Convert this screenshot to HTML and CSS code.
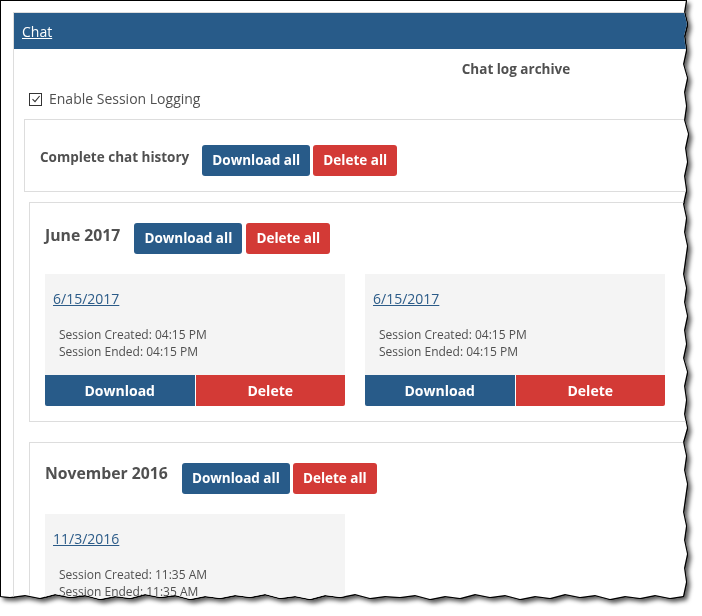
FILE: index.html
```html
<!DOCTYPE html>
<html>
<head>
<meta charset="utf-8">
<link rel="stylesheet" href="styles.css">
</head>
<body>
<div class="shot">
  <div class="paper">
    <div class="panel">
      <div class="panel-head"><a href="#" class="head-link">Chat</a></div>
      <div class="panel-body">
        <div class="archive-title">Chat log archive</div>
        <label class="logging">
          <span class="check"><svg width="10" height="10" viewBox="0 0 10 10"><path d="M1.5 5.2 L4 7.6 L8.6 2" fill="none" stroke="#333" stroke-width="1.1"/></svg></span>
          Enable Session Logging
        </label>
        <div class="history">
          <div class="history-title">Complete chat history</div>
          <div class="btn-group">
            <button class="btn btn-blue">Download all</button>
            <button class="btn btn-red">Delete all</button>
          </div>
        </div>

        <div class="month">
          <div class="month-head">
            <div class="month-title">June 2017</div>
            <div class="btn-group wide">
              <button class="btn btn-blue">Download all</button>
              <button class="btn btn-red">Delete all</button>
            </div>
          </div>
          <div class="cards">
            <div class="card">
              <div class="card-body">
                <a href="#" class="date">6/15/2017</a>
                <div class="session">Session Created: 04:15 PM<br>Session Ended: 04:15 PM</div>
              </div>
              <div class="card-actions">
                <button class="cbtn btn-blue">Download</button>
                <button class="cbtn btn-red">Delete</button>
              </div>
            </div>
            <div class="card">
              <div class="card-body">
                <a href="#" class="date">6/15/2017</a>
                <div class="session">Session Created: 04:15 PM<br>Session Ended: 04:15 PM</div>
              </div>
              <div class="card-actions">
                <button class="cbtn btn-blue">Download</button>
                <button class="cbtn btn-red">Delete</button>
              </div>
            </div>
          </div>
        </div>

        <div class="month month-gap">
          <div class="month-head">
            <div class="month-title nov">November 2016</div>
            <div class="btn-group">
              <button class="btn btn-blue">Download all</button>
              <button class="btn btn-red">Delete all</button>
            </div>
          </div>
          <div class="cards">
            <div class="card">
              <div class="card-body">
                <a href="#" class="date">11/3/2016</a>
                <div class="session">Session Created: 11:35 AM<br>Session Ended: 11:35 AM</div>
              </div>
              <div class="card-actions">
                <button class="cbtn btn-blue">Download</button>
                <button class="cbtn btn-red">Delete</button>
              </div>
            </div>
          </div>
        </div>
      </div>
    </div>
  </div>
</div>
</body>
</html>
```

FILE: styles.css
```css
html, body {
  margin: 0;
  padding: 0;
  background: #fff;
}
body {
  font-family: "Open Sans", "Liberation Sans", sans-serif;
  color: #505050;
}
.shot {
  width: 696px;
  height: 608px;
  filter: drop-shadow(1px 0 0 #000) drop-shadow(0 1px 0 #000) drop-shadow(3px 3px 2px rgba(0,0,0,0.65));
}
.paper {
  width: 690px;
  height: 600px;
  box-sizing: border-box;
  background: #fff;
  border-left: 1px solid #000;
  border-top: 1px solid #000;
  overflow: hidden;
  padding: 11px 0 0 12px;
  clip-path: polygon(0 0, 686px 0, 684px 12px, 687px 24px, 684px 36px, 686px 50px, 683px 64px, 687px 78px, 684px 92px, 686px 106px, 684px 120px, 688px 134px, 685px 148px, 687px 162px, 684px 176px, 686px 190px, 683px 204px, 686px 218px, 684px 232px, 687px 246px, 685px 260px, 683px 274px, 686px 288px, 684px 302px, 687px 316px, 684px 330px, 686px 344px, 683px 358px, 687px 372px, 684px 386px, 686px 400px, 684px 414px, 687px 428px, 683px 442px, 686px 456px, 684px 470px, 687px 484px, 685px 498px, 683px 512px, 686px 526px, 684px 540px, 687px 554px, 684px 568px, 686px 582px, 683px 596px, 670px 598px, 655px 595px, 640px 598px, 625px 596px, 610px 599px, 595px 595px, 580px 597px, 565px 594px, 550px 598px, 535px 596px, 520px 599px, 505px 595px, 490px 597px, 475px 594px, 460px 598px, 445px 596px, 430px 599px, 415px 595px, 400px 597px, 385px 596px, 370px 598px, 355px 594px, 340px 597px, 325px 595px, 310px 599px, 295px 596px, 280px 598px, 265px 594px, 250px 597px, 235px 595px, 220px 598px, 205px 596px, 190px 599px, 175px 595px, 160px 597px, 145px 594px, 130px 598px, 115px 596px, 100px 599px, 85px 595px, 70px 597px, 55px 594px, 40px 598px, 25px 595px, 10px 597px, 0 596px);
}
.panel {
  width: 1000px;
  border: 1px solid #ddd;
  border-bottom: none;
}
.panel-head {
  background: #285b89;
  height: 36px;
  line-height: 36px;
  padding-left: 8px;
}
.head-link {
  color: #fff;
  font-size: 14px;
  text-decoration: underline;
}
.panel-body {
  padding: 0 0 40px 10px;
}
.archive-title {
  text-align: center;
  font-weight: 700;
  font-size: 13.5px;
  line-height: 20px;
  margin-top: 10px;
  width: 984px;
}
.logging {
  display: flex;
  align-items: center;
  gap: 7px;
  margin: 10px 0 0 5px;
  font-size: 14px;
  line-height: 20px;
}
.check {
  width: 11px;
  height: 11px;
  border: 1px solid #333;
  display: flex;
  align-items: center;
  justify-content: center;
  background: #fff;
}
.history {
  margin-top: 10px;
  border: 1px solid #ddd;
  padding: 25px 15px 15px;
  display: flex;
  align-items: flex-start;
  gap: 13px;
}
.history-title {
  font-weight: 700;
  font-size: 13.5px;
  line-height: 20px;
  margin-top: 2px;
}
.btn-group {
  display: flex;
  gap: 3px;
}
.btn-group.wide {
  gap: 4px;
}
.btn {
  font-family: inherit;
  font-weight: 700;
  font-size: 13.5px;
  color: #fff;
  border: none;
  border-radius: 3px;
  height: 31px;
  padding: 0;
  line-height: 31px;
  white-space: nowrap;
  text-align: center;
}
.btn-blue { background: #285b89; }
.btn-red { background: #d33a36; }
.btn-blue.btn { width: 108px; }
.btn-red.btn { width: 84px; }
.month {
  margin: 10px 0 0 5px;
  border: 1px solid #ddd;
  padding: 20px 15px 15px;
}
.month-gap {
  margin-top: 20px;
}
.month-head {
  display: flex;
  align-items: flex-start;
  gap: 14px;
}
.month-title {
  font-weight: 700;
  font-size: 15.75px;
  line-height: 24px;
}
.month-title.nov {
  margin-top: -2px;
}
.cards {
  display: flex;
  gap: 20px;
  margin-top: 20px;
}
.card {
  width: 300px;
  background: #f4f4f4;
}
.card-body {
  padding: 15px 8px 15px;
}
.date {
  display: block;
  font-size: 14px;
  line-height: 20px;
  color: #2b5b88;
  text-decoration: underline;
  width: max-content;
}
.session {
  margin: 17px 0 0 6px;
  font-size: 12px;
  line-height: 17px;
}
.card-actions {
  display: flex;
  gap: 1px;
  background: #fff;
}
.cbtn {
  flex: 1;
  font-family: inherit;
  font-weight: 700;
  font-size: 14px;
  color: #fff;
  border: none;
  height: 31px;
  padding: 0;
}
.card-actions .btn-blue { border-bottom-left-radius: 2px; }
.card-actions .btn-red { border-bottom-right-radius: 2px; }
```
